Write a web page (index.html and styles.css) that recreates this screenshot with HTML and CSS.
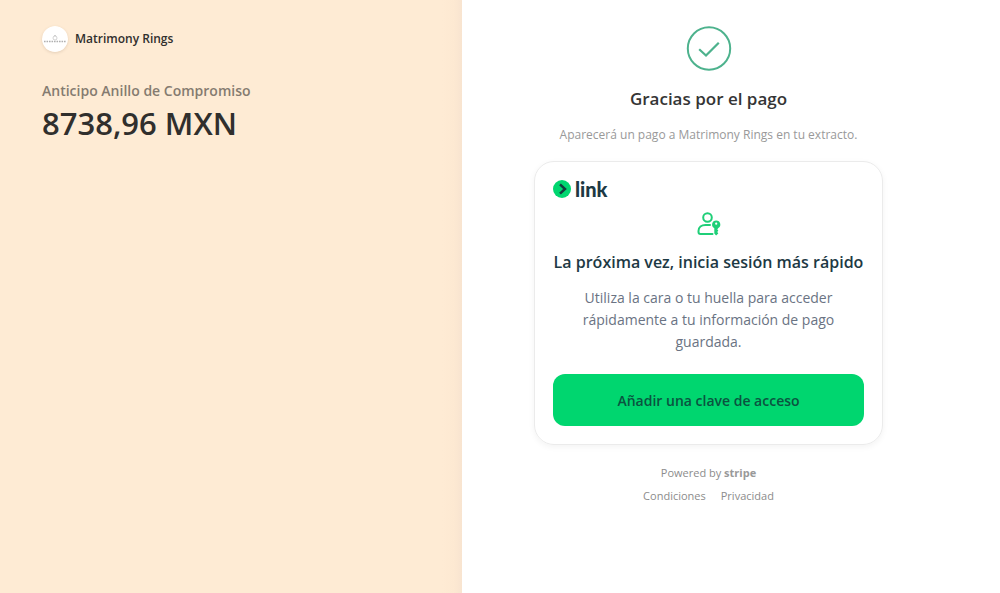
FILE: index.html
```html
<!DOCTYPE html>
<html lang="es">
<head>
<meta charset="utf-8">
<meta name="viewport" content="width=device-width, initial-scale=1">
<title>Gracias por el pago</title>
<link rel="stylesheet" href="styles.css">
</head>
<body>
<div class="checkout">
  <aside class="summary">
    <header class="merchant">
      <svg class="merchant-logo" viewBox="0 0 26 26" aria-hidden="true">
        <circle cx="13" cy="13" r="13" fill="#fff"/>
        <circle cx="13" cy="12" r="2" fill="none" stroke="#b5b5b5" stroke-width=".6"/>
        <path d="M12 9.200h2l-1 1z" fill="#aaa"/>
        <path d="M2 15.500h22" fill="none" stroke="#b0b0b0" stroke-width="1.300" stroke-dasharray="1.600 .9"/>
      </svg>
      <span class="merchant-name">Matrimony Rings</span>
    </header>
    <h2 class="product">Anticipo Anillo de Compromiso</h2>
    <p class="amount">8738,96 MXN</p>
  </aside>
  <main class="result">
    <div class="result-body">
      <svg class="success-icon" viewBox="0 0 46 46" fill="none" stroke="#4db28d" stroke-width="2" aria-hidden="true">
        <circle cx="23" cy="23.500" r="21.200"/>
        <path d="M14 25l6 5.500L32 18.500" stroke-width="2.200" stroke-linecap="square"/>
      </svg>
      <h1 class="title">Gracias por el pago</h1>
      <p class="note">Aparecerá un pago a Matrimony Rings en tu extracto.</p>
      <section class="card">
        <div class="link-logo">
          <svg class="link-mark" viewBox="0 0 18 18" aria-hidden="true">
            <circle cx="9" cy="9" r="9" fill="#00d66f"/>
            <path d="M7 4.300L12 9L7 13.700" fill="none" stroke="#123c3d" stroke-width="2.500"/>
          </svg>
          <span class="link-word">link</span>
        </div>
        <svg class="passkey-icon" viewBox="0 0 24 24" fill="none" stroke="#1fcf78" stroke-width="2" aria-hidden="true">
          <circle cx="10.500" cy="5.500" r="4.300"/>
          <path d="M13 13H8.500C4.500 13 1.500 15.200 1.500 19V20q0 2 2 2H15.500" stroke-linecap="round"/>
          <path fill="#1fcf78" stroke="none" fill-rule="evenodd" d="M19.200 8.400a4.200 4.200 0 0 0-1.900 7.900V21.500l1.800 1.900 2.200-2-1-1.400 1-1.400-1-1.200 .8-1.100a4.200 4.200 0 0 0-1.900-7.900zm0 2.200a1.100 1.100 0 1 1 0 2.200 1.100 1.100 0 0 1 0-2.200z"/>
        </svg>
        <h2 class="card-title">La próxima vez, inicia sesión más rápido</h2>
        <p class="card-text">Utiliza la cara o tu huella para acceder rápidamente a tu información de pago guardada.</p>
        <button class="passkey-button" type="button">Añadir una clave de acceso</button>
      </section>
      <footer class="footer">
        <a class="powered" href="#">Powered by <b class="stripe">stripe</b></a>
        <nav class="legal"><a href="#">Condiciones</a><a href="#">Privacidad</a></nav>
      </footer>
    </div>
  </main>
</div>
</body>
</html>
```
FILE: styles.css
```css
* { box-sizing: border-box; }
body { margin: 0; background: #fff; font-family: "Open Sans", "Noto Sans", sans-serif; }
h1, h2, p { margin: 0; }
a { color: inherit; text-decoration: none; }
svg { display: block; }

.checkout { display: flex; min-height: 100vh; }
.summary {
  flex: 0 0 46.2%;
  padding: 26px 42px;
  color: #302f2d;
  background: linear-gradient(to left, #f8e4d0, #fde9d2 8px, #feebd4 20px);
}
.merchant { display: flex; align-items: center; gap: 7px; }
.merchant-logo { width: 26px; height: 26px; border-radius: 50%; box-shadow: 0 1px 3px rgba(80, 60, 40, 0.15); }
.merchant-name { font-size: 12px; line-height: 26px; font-weight: 600; }
.product { margin-top: 28px; font-size: 14px; line-height: 22px; font-weight: 600; color: #857b70; }
.amount { font-size: 31px; line-height: 42px; font-weight: 600; }

.result { flex: 1; display: flex; justify-content: center; padding: 25px 45px 25px 0; }
.result-body { width: 100%; max-width: 349px; text-align: center; }
.success-icon { width: 46px; height: 46px; margin: 0 auto; }
.title { margin-top: 15px; font-size: 17px; line-height: 26px; font-weight: 600; color: #353535; }
.note { margin-top: 13px; font-size: 12px; line-height: 20px; color: #999; white-space: nowrap; }

.card {
  margin-top: 16px;
  padding: 18px;
  border: 1px solid #ebebeb;
  border-radius: 20px;
  box-shadow: 0 2px 6px rgba(0, 0, 0, 0.05);
}
.link-logo { display: flex; align-items: center; gap: 4px; height: 18px; }
.link-mark { width: 18px; height: 18px; }
.link-word { font-family: Lato, sans-serif; font-size: 20px; line-height: 18px; font-weight: 900; color: #1d3944; }
.passkey-icon { width: 24px; height: 24px; margin: 14px auto 0; }
.card-title { margin-top: 14px; font-size: 16px; line-height: 24px; font-weight: 600; color: #1d3944; white-space: nowrap; }
.card-text { margin-top: 13px; padding: 0 24px; font-size: 14px; line-height: 22px; color: #6a7383; }
.passkey-button {
  width: 100%;
  height: 52px;
  margin-top: 21px;
  border: 0;
  border-radius: 12px;
  background: #00d66f;
  color: #0b5340;
  font: 600 14px "Open Sans", "Noto Sans", sans-serif;
}

.footer { margin-top: 19px; font-size: 11px; line-height: 17px; color: #8c8c8c; }
.powered { display: block; }
.stripe { font-weight: 700; color: #999; }
.legal { display: flex; justify-content: center; gap: 15px; margin-top: 6px; }
```
